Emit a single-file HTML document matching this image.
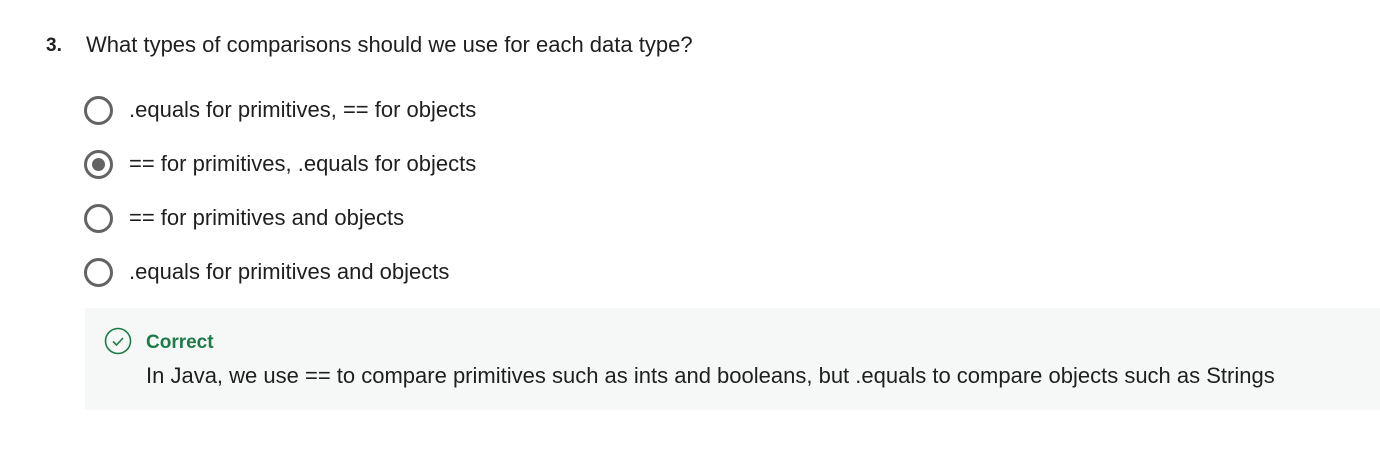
<!DOCTYPE html>
<html><head><style>
body{margin:0;width:1380px;height:454px;background:#fff;font-family:"Liberation Sans",sans-serif;color:#1f1f1f;position:relative;overflow:hidden}
.a{position:absolute;white-space:nowrap;line-height:1}
.q{left:86px;top:34px;font-size:22px}
.n{left:46px;top:36px;font-size:19px;font-weight:bold}
.r{position:absolute;left:84px;width:23px;height:23px;border:3px solid #636363;border-radius:50%}
.r.on::after{content:"";position:absolute;left:5px;top:5px;width:13px;height:13px;border-radius:50%;background:#636363}
.o{left:129px;font-size:22px}
.fb{position:absolute;left:85px;top:308px;width:1295px;height:102px;background:#f5f8f7}
</style></head><body>
<div class="a n">3.</div>
<div class="a q">What types of comparisons should we use for each data type?</div>
<div class="r" style="top:96px"></div><div class="a o" style="top:99px">.equals for primitives, == for objects</div>
<div class="r on" style="top:150px"></div><div class="a o" style="top:153px">== for primitives, .equals for objects</div>
<div class="r" style="top:204px"></div><div class="a o" style="top:207px">== for primitives and objects</div>
<div class="r" style="top:258px"></div><div class="a o" style="top:261px">.equals for primitives and objects</div>
<div class="fb"></div>
<svg class="a" style="left:104px;top:327px" width="28" height="28" viewBox="0 0 28 28"><circle cx="14" cy="14" r="12.5" fill="none" stroke="#1e7a4a" stroke-width="1.6"/><path d="M9 14.5l3.5 3.5 6.5-7" fill="none" stroke="#1e7a4a" stroke-width="1.6"/></svg>
<div class="a" style="left:146px;top:333px;font-size:19px;font-weight:bold;color:#1e7a4a">Correct</div>
<div class="a" style="left:146px;top:365px;font-size:22px">In Java, we use == to compare primitives such as ints and booleans, but .equals to compare objects such as Strings</div>
</body></html>
